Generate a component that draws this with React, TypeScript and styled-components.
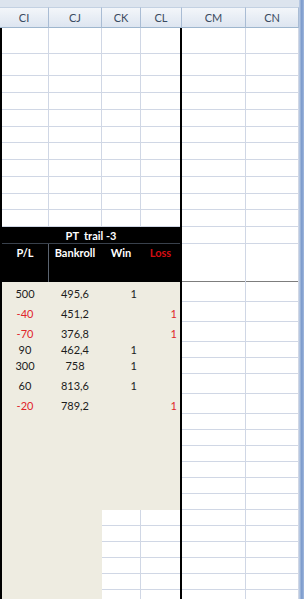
import styled, { createGlobalStyle } from "styled-components";

type Tone = "white" | "beige" | "black";

interface Trade {
  pl: string;
  bank: string;
  win: boolean;
  h: number;
}

// same grid lines as the sheet: CI CJ CK CL | CM CN
const COLUMNS = ["CI", "CJ", "CK", "CL", "CM", "CN"];

const upperRows = [26, 22, 17, 17, 17, 16, 17, 17, 17, 16, 17];

const trades: Trade[] = [
  { pl: "500", bank: "495,6", win: true, h: 20 },
  { pl: "-40", bank: "451,2", win: false, h: 20 },
  { pl: "-70", bank: "376,8", win: false, h: 20 },
  { pl: "90", bank: "462,4", win: true, h: 16 },
  { pl: "300", bank: "758", win: true, h: 16 },
  { pl: "60", bank: "813,6", win: true, h: 20 },
  { pl: "-20", bank: "789,2", win: false, h: 20 },
];

const tones: Record<Tone, string> = {
  white: "#ffffff",
  beige: "#eeece1",
  black: "#000000",
};

const lineFor = (tone: Tone) => (tone === "white" ? "#d0d7e5" : tones[tone]);

const App = () => {
  // cellen rechts van het blok (CM, CN) zijn altijd leeg
  const rightCells = (bottom?: string) => (
    <>
      <Cell $tone="white" $bottom={bottom} />
      <Cell $tone="white" $bottom={bottom} />
    </>
  );

  return (
    <Window>
      <GlobalStyle />
      <Sheet>
        <TopStrip />
        <Row $h={21}>
          {COLUMNS.map((c) => (
            <HeadCell key={c}>{c}</HeadCell>
          ))}
        </Row>

        {upperRows.map((h, i) => (
          <Row key={"u" + i} $h={h}>
            <Cell $tone="white" $first />
            <Cell $tone="white" />
            <Cell $tone="white" />
            <Cell $tone="white" $edge />
            {rightCells()}
          </Row>
        ))}

        {/* titel van de tabel */}
        <Row $h={17}>
          <Cell $tone="black" $span={4} $first $edge $align="center" $bold $bottom="#39414c">
            PT&nbsp;&nbsp;trail -3
          </Cell>
          {rightCells()}
        </Row>

        <Row $h={38}>
          <Cell $tone="black" $first $top $align="center" $bold $divider="#5b6470">
            P/L
          </Cell>
          <Cell $tone="black" $top $align="center" $bold>
            Bankroll
          </Cell>
          <Cell $tone="black" $top $align="center" $bold>
            Win
          </Cell>
          <Cell $tone="black" $edge $top $align="center" $bold $red>
            Loss
          </Cell>
          {rightCells("#7d7d7d")}
        </Row>

        {trades.map((t, i) => (
          <Row key={"t" + i} $h={t.h}>
            <Cell $tone="beige" $first $align="center" $red={t.pl.startsWith("-")}>
              {t.pl}
            </Cell>
            <Cell $tone="beige" $align="center">
              {t.bank}
            </Cell>
            <Cell $tone="beige">{t.win ? "1" : ""}</Cell>
            <Cell $tone="beige" $edge $red>
              {t.win ? "" : "1"}
            </Cell>
            {rightCells()}
          </Row>
        ))}

        {Array.from({ length: 12 }).map((_, i) => {
          const lower: Tone = i < 6 ? "beige" : "white";
          return (
            <Row key={"e" + i} $h={16}>
              <Cell $tone="beige" $first />
              <Cell $tone="beige" />
              <Cell $tone={lower} />
              <Cell $tone={lower} $edge />
              {rightCells()}
            </Row>
          );
        })}
      </Sheet>
      <Frame />
    </Window>
  );
};

const GlobalStyle = createGlobalStyle`
  html, body {
    margin: 0;
    padding: 0;
    background: #ffffff;
  }
  body {
    font-family: Lato, "Liberation Sans", sans-serif;
  }
`;

const Window = styled.div`
  display: flex;
  width: 304px;
  height: 599px;
  overflow: hidden;
`;

const Sheet = styled.div`
  width: 299px;
  display: flex;
  flex-direction: column;
  overflow: hidden;
`;

// blauwe vensterrand rechts
const Frame = styled.div`
  flex: 1;
  background: linear-gradient(to right, #c3d2e7, #7898cb 55%, #a2b9dd);
`;

const TopStrip = styled.div`
  height: 7px;
  flex-shrink: 0;
  background: #dce4ee;
`;

const Row = styled.div<{ $h: number }>`
  display: grid;
  grid-template-columns: 49px 53px 39px 41px 64px 53px;
  height: ${(p) => p.$h}px;
  flex-shrink: 0;
`;

const HeadCell = styled.div`
  box-sizing: border-box;
  display: flex;
  align-items: center;
  justify-content: center;
  background: linear-gradient(#f3f6fa, #dde5f0);
  border-top: 1px solid #c3d1e2;
  border-right: 1px solid #a9bcd4;
  border-bottom: 1px solid #9eb6ce;
  color: #3a4a60;
  font-size: 11px;
`;

// onderste rasterlijn als achtergrond, zodat de zwarte randen doorlopen
const Cell = styled.div<{
  $tone: Tone;
  $first?: boolean;
  $edge?: boolean;
  $span?: number;
  $divider?: string;
  $bottom?: string;
  $align?: "center" | "flex-end";
  $top?: boolean;
  $red?: boolean;
  $bold?: boolean;
}>`
  box-sizing: border-box;
  grid-column: span ${(p) => p.$span ?? 1};
  display: flex;
  align-items: ${(p) => (p.$top ? "flex-start" : "flex-end")};
  justify-content: ${(p) => p.$align ?? "flex-end"};
  padding: ${(p) => (p.$top ? "3px 3px 0" : "0 3px 3px")};
  background-color: ${(p) => tones[p.$tone]};
  background-image: linear-gradient(
    to top,
    ${(p) => p.$bottom ?? lineFor(p.$tone)} 1px,
    transparent 1px
  );
  border-left: ${(p) => (p.$first ? "2px solid #000" : "none")};
  border-right: ${(p) =>
    p.$edge ? "2px solid #000" : `1px solid ${p.$divider ?? lineFor(p.$tone)}`};
  color: ${(p) =>
    p.$red ? (p.$tone === "black" ? "#d40d12" : "#e0262b") : p.$tone === "black" ? "#fff" : "#1c1c1c"};
  font-size: 11px;
  line-height: 1;
  font-weight: ${(p) => (p.$bold ? 700 : 400)};
  white-space: nowrap;
`;

export default App;
